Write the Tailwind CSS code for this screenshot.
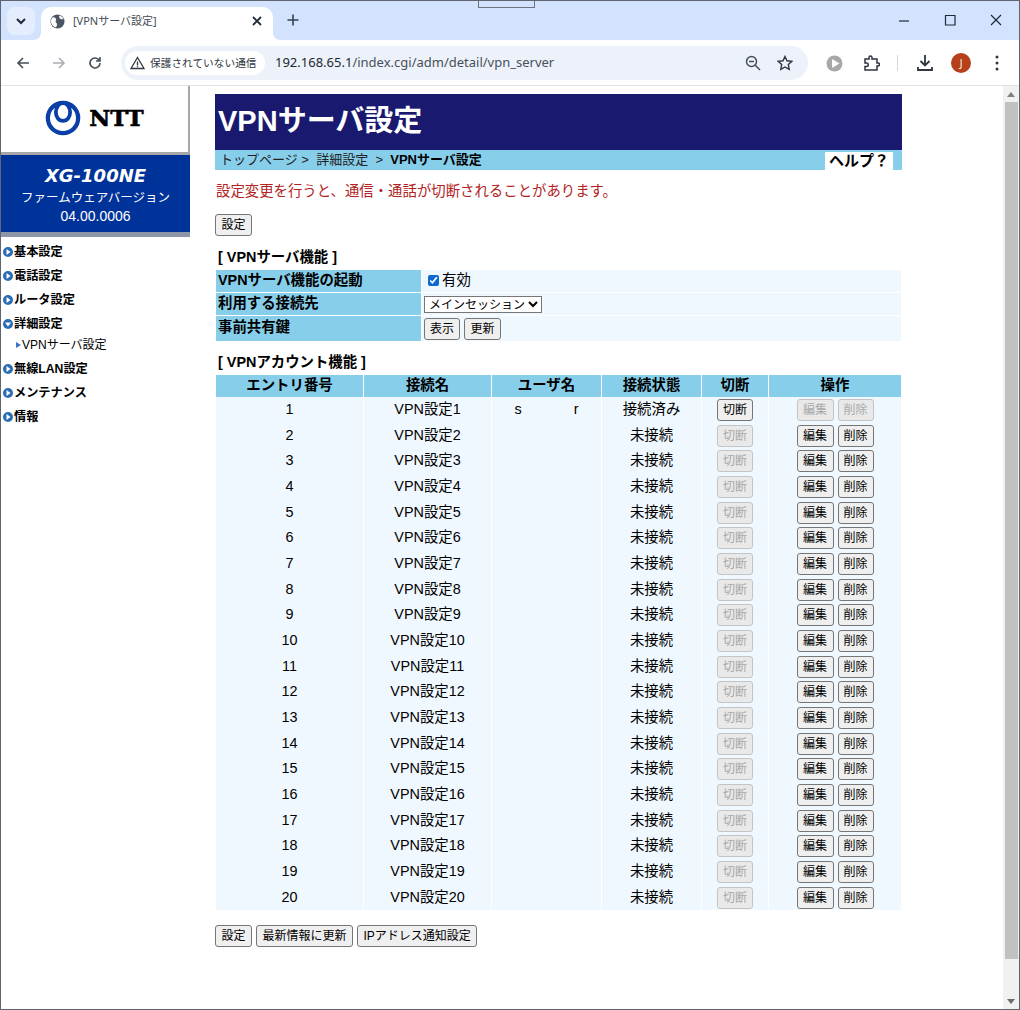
<!DOCTYPE html>
<html lang="ja">
<head>
  <meta charset="UTF-8">
  <title>[VPNサーバ設定]</title>
  <script src="https://cdn.jsdelivr.net/npm/@tailwindcss/browser@4"></script>
</head>
<body class="bg-white">
<div class="w-[1020px] h-[1010px] flex flex-col overflow-hidden border border-[#5f6670] bg-white text-black font-['Liberation_Sans','Noto_Sans_CJK_JP',sans-serif]">

  <!-- Tab strip -->
  <div class="relative h-[39px] shrink-0 bg-[#d3e3fd] flex font-['Noto_Sans','Noto_Sans_CJK_JP',sans-serif]">
    <div class="absolute left-[477px] -top-px w-[57px] h-[8px] border border-t-0 border-[#6b7280]"></div>
    <div class="ml-[6px] mt-[6px] w-[28px] h-[28px] rounded-lg bg-[#e4edfc] flex items-center justify-center">
      <svg width="12" height="12" viewBox="0 0 12 12" fill="none" stroke="#1f2937" stroke-width="2"><path d="M2 4l4 4 4-4"/></svg>
    </div>
    <div class="relative ml-[6px] mt-[6px] w-[232px] h-[33px] bg-white rounded-t-[10px] flex items-center pl-[9px] pr-[10px] pb-[5px]">
      <svg class="absolute -left-[8px] bottom-0" width="8" height="8" viewBox="0 0 8 8" fill="#fff"><path d="M8 0v8H0c5 0 8-3 8-8z"/></svg>
      <svg class="absolute -right-[8px] bottom-0" width="8" height="8" viewBox="0 0 8 8" fill="#fff"><path d="M0 0v8h8C3 8 0 5 0 0z"/></svg>
      <svg width="15" height="15" viewBox="0 0 16 16"><circle cx="8" cy="8" r="7.500" fill="#4b5563"/><path d="M3 3.500c2 0 3 .5 3.500 2 .4 1.500-1 1.500-.5 3 .4 1 1.500 1 1.500 2.500 0 1-.5 2-1 3.500C3.500 13.500 1 11 1 8c0-1.500.8-3.400 2-4.500zM10 1.500c2 .5 3.500 2 4.500 4-1.500.5-2.500 0-3.500-.5-1-.8-1.500-2-1-3.500z" fill="#fff"/></svg>
      <span class="ml-[8px] text-[11px] text-[#444c56] grow">[VPNサーバ設定]</span>
      <svg width="12" height="12" viewBox="0 0 12 12" stroke="#1f2937" stroke-width="1.800"><path d="M2 2l8 8M10 2l-8 8"/></svg>
    </div>
    <svg class="ml-[14px] mt-[13px]" width="12" height="12" viewBox="0 0 12 12" stroke="#374151" stroke-width="1.600"><path d="M6 .5v11M.5 6h11"/></svg>
    <div class="ml-auto flex items-start pt-[13px] pr-[17px]">
      <svg class="mr-[34px]" width="12" height="12" viewBox="0 0 12 12" stroke="#1f2937" stroke-width="1.200"><path d="M1 7h10"/></svg>
      <svg class="mr-[34px]" width="12" height="12" viewBox="0 0 12 12" fill="none" stroke="#1f2937" stroke-width="1.200"><path d="M1.500 1.500h9.500v9.500h-9.500z"/></svg>
      <svg width="12" height="12" viewBox="0 0 12 12" stroke="#1f2937" stroke-width="1.200"><path d="M1 1l10 10M11 1l-10 10"/></svg>
    </div>
  </div>

  <!-- Toolbar -->
  <div class="h-[47px] shrink-0 bg-white rounded-t-[9px] -mt-px border-b border-[#e2e2e2] pt-[2px] flex items-center font-['Noto_Sans','Noto_Sans_CJK_JP',sans-serif]">
    <svg class="ml-[15px]" width="14" height="14" viewBox="0 0 14 14" fill="none" stroke="#46505a" stroke-width="1.600"><path d="M13 7H2M7 2L2 7l5 5"/></svg>
    <svg class="ml-[22px]" width="14" height="14" viewBox="0 0 14 14" fill="none" stroke="#a9aeb4" stroke-width="1.600"><path d="M1 7h11M7 2l5 5-5 5"/></svg>
    <svg class="ml-[22px]" width="14" height="14" viewBox="0 0 14 14" fill="none" stroke="#46505a" stroke-width="1.600"><path d="M12 7a5 5 0 1 1-1.500-3.600L12 5M12 1v4H8"/></svg>
    <div class="ml-[19px] w-[687px] h-[34px] rounded-full bg-[#edf2fa] flex items-center pl-[4px] pr-[15px]">
      <div class="w-[140px] h-[24px] rounded-full bg-white flex items-center pl-[5px]">
        <svg width="15" height="14" viewBox="0 0 15 14" fill="none" stroke="#2f3640" stroke-width="1.300"><path d="M7.500 1.500L14 12.500H1zM7.500 5.500v4M7.500 10.300v1"/></svg>
        <span class="ml-[5px] text-[10.700px] text-[#2f3640] whitespace-nowrap">保護されていない通信</span>
      </div>
      <span class="ml-[10px] text-[13px] text-[#46505a] whitespace-nowrap grow"><span class="text-[#202731]">192.168.65.1</span>/index.cgi/adm/detail/vpn_server</span>
      <svg width="16" height="16" viewBox="0 0 16 16" fill="none" stroke="#46505a" stroke-width="1.500"><circle cx="6.500" cy="6.500" r="5"/><path d="M10 10l5 5M4 6.500h5"/></svg>
      <svg class="ml-[16px]" width="16" height="16" viewBox="0 0 16 16" fill="none" stroke="#2f3640" stroke-width="1.400"><path d="M8 1.500l2 4.300 4.700.6-3.400 3.200.9 4.700L8 12l-4.200 2.300.9-4.700L1.300 6.400 6 5.800z"/></svg>
    </div>
    <svg class="ml-[18px]" width="17" height="17" viewBox="0 0 17 17"><circle cx="8.500" cy="8.500" r="8" fill="#a8a8a8"/><path d="M6 4l7.500 4.500L6 13z" fill="#fff"/></svg>
    <svg class="ml-[20px]" width="17" height="17" viewBox="0 0 17 17" fill="none" stroke="#2f3640" stroke-width="1.500"><path d="M2 4h4V2.500a1.500 1.500 0 0 1 3 0V4h5v4h1a1.500 1.500 0 0 1 0 3h-1v4H2v-3.500h1.500a1.500 1.500 0 0 0 0-3.500H2z"/></svg>
    <div class="ml-[17px] w-[1px] h-[16px] bg-[#d5d8dc]"></div>
    <svg class="ml-[18px]" width="18" height="18" viewBox="0 0 18 18" fill="none" stroke="#2f3640" stroke-width="1.800"><path d="M9 1v10M4.500 7L9 11.500 13.500 7M2 13v3h14v-3"/></svg>
    <div class="ml-[17px] w-[20px] h-[20px] rounded-full bg-[#b5401a] text-white text-[10px] flex items-center justify-center">J</div>
    <svg class="ml-[24px]" width="4" height="16" viewBox="0 0 4 16" fill="#2f3640"><circle cx="2" cy="2" r="1.500"/><circle cx="2" cy="8" r="1.500"/><circle cx="2" cy="14" r="1.500"/></svg>
  </div>

  <!-- Page -->
  <div class="flex grow min-h-0">
    <!-- Sidebar -->
    <aside class="w-[189px] shrink-0">
      <div class="h-[69px] border-r-2 border-[#a8a8a8] border-b-[3px] border-b-[#a8a8a8] flex items-center justify-center pb-[3px]">
        <svg width="36" height="36" viewBox="0 0 38 38" fill="none" stroke="#0b3fa8"><circle cx="19" cy="19" r="16" stroke-width="4.500"/><path d="M19 3c-4.500 0-7.500 5-7.500 10s3 9 7.500 9 7.500-4 7.500-9-3-10-7.500-10z" stroke-width="4"/></svg>
        <span class="ml-[8px] text-[23px] leading-none font-bold [-webkit-text-stroke:0.6px_black] font-['DejaVu_Serif',serif]">NTT</span>
      </div>
      <div class="h-[82px] bg-[#003399] border-b-[5px] border-[#8c96a8] text-white text-center pt-[10px]">
        <div class="text-[18px] leading-[22px] font-bold italic font-['DejaVu_Sans',sans-serif]">XG-100NE</div>
        <div class="mt-[2px] text-[12.500px] leading-[18px]">ファームウェアバージョン</div>
        <div class="text-[14px] leading-[18px]">04.00.0006</div>
      </div>
      <nav id="side-menu" class="mt-[3px] text-[12.200px]"></nav>
    </aside>

    <!-- Main content -->
    <main class="w-[687px] ml-[25px] mt-[8px] shrink-0">
      <h1 class="h-[56px] bg-[#191970] text-white text-[29px] leading-[55px] font-bold pl-[3px]">VPNサーバ設定</h1>
      <div class="h-[20px] bg-[#87ceeb] flex items-center justify-between pl-[5px] pr-[9px] text-[13px]">
        <span class="whitespace-pre text-[#222]">トップページ &gt;  詳細設定  &gt;  <b class="text-black">VPNサーバ設定</b></span>
        <span class="w-[68px] h-[18px] mt-[2px] bg-white text-center font-bold text-[15px] leading-[18px]">ヘルプ？</span>
      </div>
      <p class="mt-[12px] ml-px text-[14.400px] leading-[18px] text-[#b22222]">設定変更を行うと、通信・通話が切断されることがあります。</p>
      <button class="mt-[14px] h-[22px] px-[5.500px] text-[12px] bg-[#efefef] border border-[#767676] rounded-[3px] block">設定</button>

      <h2 class="mt-[12px] ml-[3px] text-[14.400px] leading-[18px] font-bold">[ VPNサーバ機能 ]</h2>
      <div class="ml-px mt-[4px] w-[685px] grid grid-cols-[205px_479px] gap-x-px gap-y-px text-[14.400px] font-bold">
        <div class="h-[22px] bg-[#87ceeb] pl-[2px] leading-[20px]">VPNサーバ機能の起動</div>
        <div class="h-[22px] bg-[#f0f8ff] pl-[6px] pb-px flex items-center font-normal">
          <input type="checkbox" checked class="w-[11px] h-[11px] accent-[#0b6bd0]">
          <label class="ml-[3px]">有効</label>
        </div>
        <div class="h-[22px] bg-[#87ceeb] pl-[2px] leading-[20px]">利用する接続先</div>
        <div class="h-[22px] bg-[#f0f8ff] pl-[2px] flex items-center font-normal">
          <select class="w-[118px] h-[17px] text-[12px] bg-white border border-[#767676]"><option>メインセッション</option></select>
        </div>
        <div class="h-[25px] bg-[#87ceeb] pl-[2px] leading-[22px]">事前共有鍵</div>
        <div class="h-[25px] bg-[#f0f8ff] pl-[2px] flex items-center gap-[4px] font-normal">
          <button class="h-[22px] w-[36px] text-[12px] bg-[#efefef] border border-[#767676] rounded-[3px]">表示</button>
          <button class="h-[22px] w-[37px] text-[12px] bg-[#efefef] border border-[#767676] rounded-[3px]">更新</button>
        </div>
      </div>

      <h2 class="mt-[12px] ml-[3px] text-[14.400px] leading-[18px] font-bold">[ VPNアカウント機能 ]</h2>
      <div id="vpn-table" class="ml-px mt-[4px] w-[685px] grid grid-cols-[147px_127px_109px_99px_66px_132px] gap-x-px text-[14.400px] text-center">
        <div class="h-[22px] bg-[#87ceeb] font-bold leading-[21px]">エントリ番号</div>
        <div class="h-[22px] bg-[#87ceeb] font-bold leading-[21px]">接続名</div>
        <div class="h-[22px] bg-[#87ceeb] font-bold leading-[21px]">ユーザ名</div>
        <div class="h-[22px] bg-[#87ceeb] font-bold leading-[21px]">接続状態</div>
        <div class="h-[22px] bg-[#87ceeb] font-bold leading-[21px]">切断</div>
        <div class="h-[22px] bg-[#87ceeb] font-bold leading-[21px]">操作</div>
      </div>

      <div class="mt-[15px] flex gap-[4px]">
        <button class="h-[22px] px-[5.500px] text-[12px] bg-[#efefef] border border-[#767676] rounded-[3px]">設定</button>
        <button class="h-[22px] px-[5.500px] text-[12px] bg-[#efefef] border border-[#767676] rounded-[3px]">最新情報に更新</button>
        <button class="h-[22px] px-[5.500px] text-[12px] bg-[#efefef] border border-[#767676] rounded-[3px]">IPアドレス通知設定</button>
      </div>
    </main>

    <!-- Scrollbar -->
    <div class="ml-auto w-[16px] shrink-0 bg-[#f1f1f1] flex flex-col items-center">
      <svg class="mt-[6px]" width="8" height="5" viewBox="0 0 8 5" fill="#808080"><path d="M4 0l4 5H0z"/></svg>
      <div class="mt-[5px] w-[13px] h-[857px] bg-[#c1c1c1]"></div>
      <svg class="mt-auto mb-[5px]" width="8" height="5" viewBox="0 0 8 5" fill="#6b6b6b"><path d="M0 0h8L4 5z"/></svg>
    </div>
  </div>
</div>

<script>
  const enabledBtn = "h-[22px] text-[12px] bg-[#efefef] border border-[#767676] rounded-[3px]";
  const disabledBtn = "h-[22px] text-[12px] text-[#a8a8a8] bg-[#e9e9e9] border border-[#c4c4c4] rounded-[3px]";
  const cell = "h-[25.680px] bg-[#f0f8ff] flex items-center justify-center";

  const menu = [
    ["基本設定", "right"], ["電話設定", "right"], ["ルータ設定", "right"], ["詳細設定", "down"],
    ["VPNサーバ設定", "sub"], ["無線LAN設定", "right"], ["メンテナンス", "right"], ["情報", "right"]
  ];
  document.getElementById("side-menu").innerHTML = menu.map(([name, kind]) => {
    if (kind === "sub") {
      return `<div class="h-[18px] mb-[3px] flex items-center pl-[15px] text-[12px]"><svg width="5" height="6" viewBox="0 0 5 6" fill="#3b74c4"><path d="M0 0l5 3-5 3z"/></svg><span class="ml-px">${name}</span></div>`;
    }
    const arrow = kind === "down" ? "M2 3.500h6L5 7.500z" : "M3.500 2l4 3-4 3z";
    return `<div class="h-[24px] flex items-center pl-[2px] font-bold"><svg width="10" height="10" viewBox="0 0 10 10"><circle cx="5" cy="5" r="5" fill="#2a6db5"/><path d="${arrow}" fill="#fff"/></svg><span class="ml-px">${name}</span></div>`;
  }).join("");

  let rows = "";
  for (let i = 1; i <= 20; i++) {
    const first = i === 1;
    rows += `
      <div class="${cell}">${i}</div>
      <div class="${cell}">VPN設定${i}</div>
      <div class="${cell} whitespace-pre">${first ? "s             r" : ""}</div>
      <div class="${cell}">${first ? "接続済み" : "未接続"}</div>
      <div class="${cell}"><button class="w-[36px] ${first ? enabledBtn : disabledBtn}" ${first ? "" : "disabled"}>切断</button></div>
      <div class="${cell} gap-[4px]">
        <button class="w-[37px] ${first ? disabledBtn : enabledBtn}" ${first ? "disabled" : ""}>編集</button>
        <button class="w-[36px] ${first ? disabledBtn : enabledBtn}" ${first ? "disabled" : ""}>削除</button>
      </div>`;
  }
  document.getElementById("vpn-table").insertAdjacentHTML("beforeend", rows);
</script>
</body>
</html>
